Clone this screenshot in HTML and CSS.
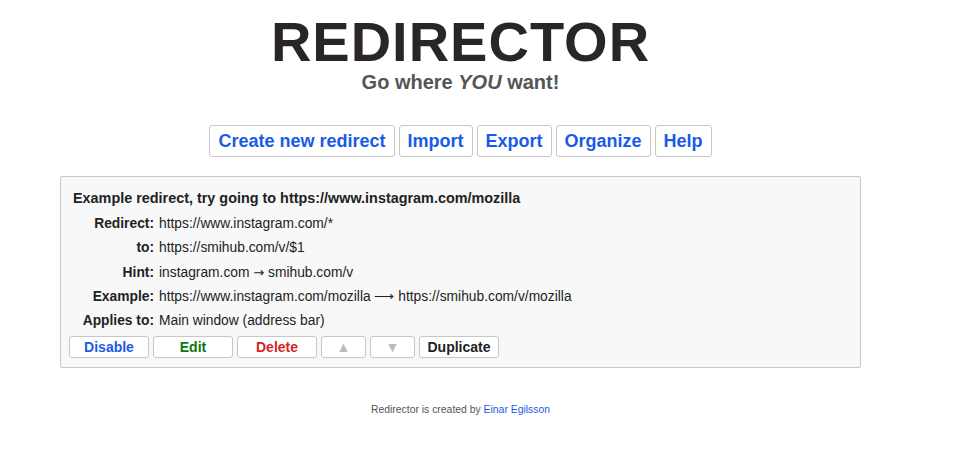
FILE: index.html
```html
<!DOCTYPE html>
<html lang="en">
<head>
    <meta charset="UTF-8">
    <title>Redirector</title>
    <link rel="stylesheet" href="styles.css">
</head>
<body>
    <div id="page">
        <div id="header">
            <h1>REDIRECTOR</h1>
            <h3>Go where <em>YOU</em> want!</h3>
        </div>

        <div id="menu">
            <button>Create new redirect</button>
            <button>Import</button>
            <button>Export</button>
            <button>Organize</button>
            <button>Help</button>
        </div>

        <div class="redirect-row">
            <h4>Example redirect, try going to https://www.instagram.com/mozilla</h4>
            <div class="details">
                <label>Redirect:</label><span>https://www.instagram.com/*</span>
                <label>to:</label><span>https://smihub.com/v/$1</span>
                <label>Hint:</label><span>instagram.com <i class="arrow">&rarr;</i> smihub.com/v</span>
                <label>Example:</label><span>https://www.instagram.com/mozilla &xrarr; https://smihub.com/v/mozilla</span>
                <label>Applies to:</label><span>Main window (address bar)</span>
            </div>
            <div class="actions">
                <button class="btn-disable">Disable</button>
                <button class="btn-edit">Edit</button>
                <button class="btn-delete">Delete</button>
                <button class="btn-arrow">&#9650;</button>
                <button class="btn-arrow">&#9660;</button>
                <button class="btn-dup">Duplicate</button>
            </div>
        </div>

        <footer>Redirector is created by <a href="#">Einar Egilsson</a></footer>
    </div>
</body>
</html>
```

FILE: styles.css
```css
body { margin: 0; font-family: "Liberation Sans", Arial, sans-serif; background: #fff; color: #222; }
#page { width: 801px; margin-left: 60px; padding-top: 13px; }

#header { text-align: center; }
#header h1 { margin: 0; font-size: 56px; line-height: 58px; font-weight: bold; color: #2a2626; letter-spacing: 1px; }
#header h3 { margin: 0; font-size: 20px; line-height: 22px; color: #555; }

#menu { text-align: center; margin-top: 32px; font-size: 0; }
#menu button {
    font-family: inherit; font-size: 18px; font-weight: bold; color: #1a5ae8;
    background: #fff; border: 1px solid #c8c8c8; border-radius: 3px;
    height: 32px; padding: 0 8px; margin: 0 2px; cursor: pointer;
}

.redirect-row {
    margin-top: 19px; background: #f8f8f8; border: 1px solid #c8c8c8; border-radius: 2px;
    padding: 12px 8px 9px 8px;
}
.redirect-row h4 { margin: 0 0 0 4px; font-size: 14.4px; line-height: 18px; color: #222; }
.details {
    display: grid; grid-template-columns: 85px auto; column-gap: 5px;
    margin-top: 5px; font-size: 13.8px; line-height: 24.3px;
}
.details label { text-align: right; font-weight: bold; color: #222; }
.details span { color: #222; }
.details .arrow { font-style: normal; font-family: "DejaVu Sans", sans-serif; font-size: 13px; }

.actions { display: flex; gap: 4px; margin-top: 3px; }
.actions button {
    width: 80px; height: 22px; padding: 0; font-family: inherit; font-size: 14px; font-weight: bold;
    background: #fff; border: 1px solid #c8c8c8; border-radius: 3px; cursor: pointer;
}
.actions .btn-disable { color: #1a5ae8; }
.actions .btn-edit { color: #0a7a0a; }
.actions .btn-delete { color: #d42424; }
.actions .btn-arrow { width: 45px; color: #bbb; font-size: 14px; }
.actions .btn-dup { color: #222; }

footer { text-align: center; font-size: 10.4px; color: #555; margin-top: 36px; }
footer a { color: #1a5ae8; text-decoration: none; }
```
